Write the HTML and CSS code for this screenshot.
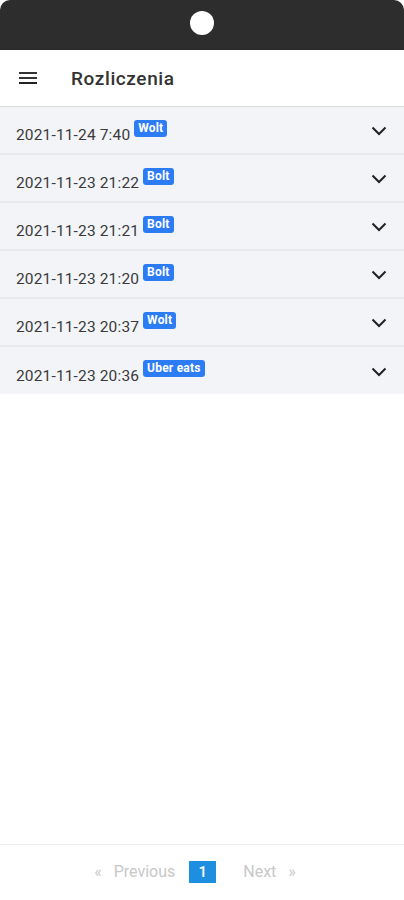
FILE: index.html
```html
<!DOCTYPE html>
<html lang="pl">
<head>
	<meta charset="UTF-8">
	<meta name="viewport" content="width=device-width, initial-scale=1.0">
	<title>Rozliczenia</title>
	<link rel="stylesheet" href="styles.css">
</head>
<body>
	<div class="phone">
		<div class="notch-bar"><span class="camera"></span></div>

		<div class="toolbar">
			<svg class="menu-icon" width="18" height="12" viewBox="0 0 18 12">
				<rect x="0" y="0" width="18" height="2" fill="#333"/>
				<rect x="0" y="5" width="18" height="2" fill="#333"/>
				<rect x="0" y="10" width="18" height="2" fill="#222"/>
			</svg>
			<div class="toolbar-title">Rozliczenia</div>
		</div>

		<div class="list">
			<div class="item">
				<span class="date">2021-11-24 7:40</span><span class="badge">Wolt</span>
				<svg class="chevron" width="16" height="10" viewBox="0 0 16 10"><path d="M1.5 1.5 L8 8 L14.5 1.5" fill="none" stroke="#222" stroke-width="2"/></svg>
			</div>
			<div class="item">
				<span class="date">2021-11-23 21:22</span><span class="badge">Bolt</span>
				<svg class="chevron" width="16" height="10" viewBox="0 0 16 10"><path d="M1.5 1.5 L8 8 L14.5 1.5" fill="none" stroke="#222" stroke-width="2"/></svg>
			</div>
			<div class="item">
				<span class="date">2021-11-23 21:21</span><span class="badge">Bolt</span>
				<svg class="chevron" width="16" height="10" viewBox="0 0 16 10"><path d="M1.5 1.5 L8 8 L14.5 1.5" fill="none" stroke="#222" stroke-width="2"/></svg>
			</div>
			<div class="item">
				<span class="date">2021-11-23 21:20</span><span class="badge">Bolt</span>
				<svg class="chevron" width="16" height="10" viewBox="0 0 16 10"><path d="M1.5 1.5 L8 8 L14.5 1.5" fill="none" stroke="#222" stroke-width="2"/></svg>
			</div>
			<div class="item">
				<span class="date">2021-11-23 20:37</span><span class="badge">Wolt</span>
				<svg class="chevron" width="16" height="10" viewBox="0 0 16 10"><path d="M1.5 1.5 L8 8 L14.5 1.5" fill="none" stroke="#222" stroke-width="2"/></svg>
			</div>
			<div class="item">
				<span class="date">2021-11-23 20:36</span><span class="badge">Uber eats</span>
				<svg class="chevron" width="16" height="10" viewBox="0 0 16 10"><path d="M1.5 1.5 L8 8 L14.5 1.5" fill="none" stroke="#222" stroke-width="2"/></svg>
			</div>
		</div>

		<div class="spacer"></div>

		<div class="pager">
			<span class="pager-link">&laquo;&nbsp;&nbsp;&nbsp;Previous</span>
			<span class="pager-page">1</span>
			<span class="pager-link">Next&nbsp;&nbsp;&nbsp;&raquo;</span>
		</div>
	</div>
</body>
</html>
```

FILE: styles.css
```css
* {
	box-sizing: border-box;
}
body {
	margin: 0;
	background-color: white;
	font-family: Roboto, "Liberation Sans", Arial, sans-serif;
	color: #333;
}
.phone {
	height: 900px;
	display: flex;
	flex-direction: column;
}
.notch-bar {
	height: 50px;
	background-color: #2d2d2d;
	border-radius: 10px 10px 0 0;
	display: flex;
	justify-content: center;
	padding-top: 11px;
	flex-shrink: 0;
}
.camera {
	width: 24px;
	height: 24px;
	border-radius: 50%;
	background-color: white;
}
.toolbar {
	height: 56px;
	display: flex;
	align-items: center;
	padding-left: 19px;
	background-color: white;
	flex-shrink: 0;
}
.menu-icon {
	display: block;
}
.toolbar-title {
	margin-left: 34px;
	font-size: 19px;
	font-weight: 500;
	color: #333;
	letter-spacing: 0.6px;
}
.list {
	border-top: 1px solid #d8d8d8;
	box-shadow: inset 0 2px 2px rgba(0, 0, 0, 0.08);
	flex-shrink: 0;
}
.item {
	height: 48px;
	display: flex;
	align-items: center;
	padding: 0 17px 0 16px;
	background-color: #f3f4f8;
	border-bottom: 2px solid #e8e9ed;
}
.item:last-child {
	border-bottom: none;
	height: 47px;
}
.date {
	font-size: 15.5px;
	letter-spacing: 0.15px;
	color: #3a3a3a;
	padding-top: 10px;
}
.badge {
	margin-left: 4px;
	margin-bottom: 4px;
	background-color: #2c7cf6;
	color: white;
	font-size: 12px;
	font-weight: 700;
	padding: 1px 4px 2px;
	border-radius: 3px;
	line-height: 14px;
	letter-spacing: 0.2px;
}
.chevron {
	margin-left: auto;
	margin-top: 2px;
}
.spacer {
	flex: 1;
}
.pager {
	height: 56px;
	border-top: 1px solid #ececec;
	display: flex;
	align-items: center;
	justify-content: center;
	padding-bottom: 2px;
	padding-right: 14px;
	flex-shrink: 0;
}
.pager-link {
	font-size: 16px;
	color: #c8c8c8;
}
.pager-page {
	margin: 0 27px 0 14px;
	width: 27px;
	height: 22px;
	background-color: #1e8fe0;
	color: white;
	font-size: 15px;
	font-weight: 500;
	display: flex;
	align-items: center;
	justify-content: center;
}
```
